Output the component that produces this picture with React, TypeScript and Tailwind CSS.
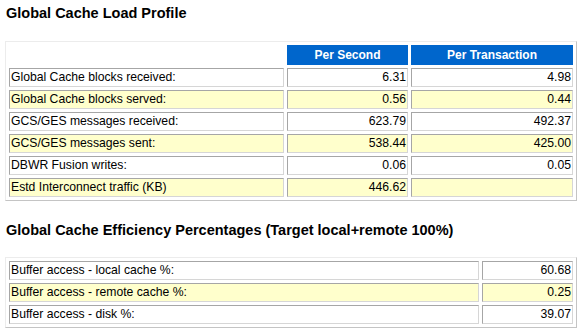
import React from "react";

type Row = { label: string; a: string; b?: string };

const loadRows: Row[] = [
  { label: "Global Cache blocks received:", a: "6.31", b: "4.98" },
  { label: "Global Cache blocks served:", a: "0.56", b: "0.44" },
  { label: "GCS/GES messages received:", a: "623.79", b: "492.37" },
  { label: "GCS/GES messages sent:", a: "538.44", b: "425.00" },
  { label: "DBWR Fusion writes:", a: "0.06", b: "0.05" },
  { label: "Estd Interconnect traffic (KB)", a: "446.62", b: "" },
];

const effRows: Row[] = [
  { label: "Buffer access - local cache %:", a: "60.68" },
  { label: "Buffer access - remote cache %:", a: "0.25" },
  { label: "Buffer access - disk %:", a: "39.07" },
];

const tableCls =
  "ml-[5px] w-[572px] table-fixed border-separate border-spacing-[3px] border border-t-[#ececec] border-l-[#ececec] border-b-[#c4c4c4] border-r-[#c4c4c4]";

const cellBase =
  "h-[19px] px-[1px] py-[1px] text-[12.2px] leading-[15px] align-top border border-t-[#a6a6a6] border-l-[#a6a6a6] border-b-[#d6d6d6] border-r-[#d6d6d6] whitespace-nowrap overflow-hidden";

const App = () => {
  return (
    <div className="w-[577px] h-[333px] overflow-hidden bg-white text-black font-['Liberation_Sans',Arial,sans-serif]">
      <h2 className="pl-[6px] pt-[5px] text-[14.5px] leading-[17px] font-bold">Global Cache Load Profile</h2>

      <table className={`mt-[19px] ${tableCls}`}>
        <thead>
          <tr>
            <th className="w-[275px] h-[20px] p-0"></th>
            <th className="w-[121px] h-[20px] p-0 bg-[#0066cc] border border-[#0066cc] text-white text-[12px] leading-[15px] font-bold text-center">
              Per Second
            </th>
            <th className="h-[20px] p-0 bg-[#0066cc] border border-[#0066cc] text-white text-[12px] leading-[15px] font-bold text-center">
              Per Transaction
            </th>
          </tr>
        </thead>
        <tbody>
          {loadRows.map((r, i) => {
            const bg = i % 2 === 1 ? "bg-[#ffffcc]" : "bg-white";
            return (
              <tr key={r.label}>
                <td className={`${cellBase} ${bg} text-left`}>{r.label}</td>
                <td className={`${cellBase} ${bg} text-right`}>{r.a}</td>
                <td className={`${cellBase} ${bg} text-right`}>{r.b}</td>
              </tr>
            );
          })}
        </tbody>
      </table>

      <h2 className="pl-[6px] mt-[21px] text-[14.5px] leading-[17px] font-bold">
        Global Cache Efficiency Percentages (Target local+remote 100%)
      </h2>

      <table className={`mt-[18px] ${tableCls}`}>
        <tbody>
          {effRows.map((r, i) => {
            const bg = i % 2 === 1 ? "bg-[#ffffcc]" : "bg-white";
            return (
              <tr key={r.label}>
                <td className={`${cellBase} ${bg} w-[470px] text-left`}>{r.label}</td>
                <td className={`${cellBase} ${bg} text-right`}>{r.a}</td>
              </tr>
            );
          })}
        </tbody>
      </table>
    </div>
  );
};

export default App;
